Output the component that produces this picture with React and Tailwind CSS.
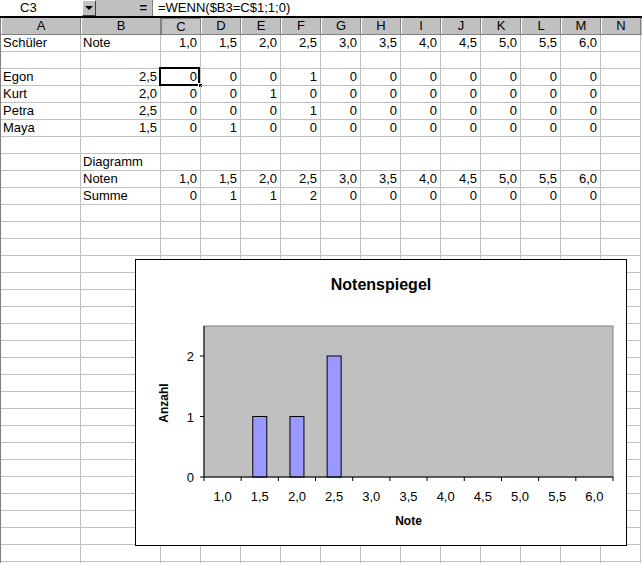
import React from 'react'

const cols = ['A', 'B', 'C', 'D', 'E', 'F', 'G', 'H', 'I', 'J', 'K', 'L', 'M', 'N']
const noten = ['1,0', '1,5', '2,0', '2,5', '3,0', '3,5', '4,0', '4,5', '5,0', '5,5', '6,0']

const z = (hit) => noten.map((_, i) => (i === hit ? '1' : '0'))

const rows = [
  ['Schüler', 'Note', ...noten],
  [],
  ['Egon', '2,5', ...z(3)],
  ['Kurt', '2,0', ...z(2)],
  ['Petra', '2,5', ...z(3)],
  ['Maya', '1,5', ...z(1)],
  [],
  ['', 'Diagramm'],
  ['', 'Noten', ...noten],
  ['', 'Summe', '0', '1', '1', '2', '0', '0', '0', '0', '0', '0', '0'],
]

const sums = [0, 1, 1, 2, 0, 0, 0, 0, 0, 0, 0]

const Chart = () => {
  // plot area inside the chart frame
  const px = 68, py = 66, pw = 409, ph = 151
  const step = pw / 11
  const unit = 60.5
  const base = py + ph
  return (
    <div className="absolute left-[135px] top-[259px] w-[492px] h-[287px] border border-black bg-white">
      <svg width="490" height="285" className="block" style={{ fontFamily: '"Liberation Sans", Arial, sans-serif' }}>
        <text x="245" y="30" textAnchor="middle" fontSize="16" fontWeight="bold" fill="#000">Notenspiegel</text>
        <rect x={px} y={py} width={pw} height={ph} fill="#c0c0c0" stroke="#808080" strokeWidth="1" />
        {sums.map((v, i) =>
          v > 0 ? (
            <rect
              key={i}
              x={px + (i + 0.5) * step - 7}
              y={base - v * unit}
              width="14"
              height={v * unit}
              fill="#9999ff"
              stroke="#000"
              strokeWidth="1"
            />
          ) : null
        )}
        <line x1={px} y1={py} x2={px} y2={base} stroke="#000" />
        <line x1={px} y1={base} x2={px + pw} y2={base} stroke="#000" />
        {[0, 1, 2].map((v) => (
          <g key={v}>
            <line x1={px - 4} y1={base - v * unit} x2={px} y2={base - v * unit} stroke="#000" />
            <text x={px - 10} y={base - v * unit + 5} textAnchor="end" fontSize="13" fill="#000">{v}</text>
          </g>
        ))}
        {Array.from({ length: 12 }).map((_, i) => (
          <line key={i} x1={px + i * step} y1={base} x2={px + i * step} y2={base + 4} stroke="#000" />
        ))}
        {noten.map((n, i) => (
          <text key={n} x={px + (i + 0.5) * step} y={base + 24} textAnchor="middle" fontSize="13" fill="#000">{n}</text>
        ))}
        <text x={px + pw / 2} y="265" textAnchor="middle" fontSize="12" fontWeight="bold" fill="#000">Note</text>
        <text
          x="0"
          y="0"
          transform="translate(32 143) rotate(-90)"
          textAnchor="middle"
          fontSize="12"
          fontWeight="bold"
          fill="#000"
        >
          Anzahl
        </text>
      </svg>
    </div>
  )
}

const App = () => {
  const total = 32

  return (
    <div className="relative w-[642px] h-[563px] overflow-hidden bg-white text-black text-[13px] font-['Liberation_Sans',Arial,sans-serif]">
      {/* Formula bar */}
      <div className="flex h-[18px] border-b-2 border-black">
        <div className="w-[82px] pl-[20px] leading-[16px] bg-white">C3</div>
        <div className="w-[14px] h-[16px] flex items-center justify-center bg-[#c0c0c0] border-t border-l border-white border-r border-b border-r-[#404040] border-b-[#404040]">
          <div className="w-0 h-0 border-l-[4px] border-r-[4px] border-t-[4px] border-l-transparent border-r-transparent border-t-black" />
        </div>
        <div className="w-[56px] bg-[#c0c0c0] flex justify-end pr-[5px] font-bold leading-[16px]">=</div>
        <div className="flex-1 bg-white pl-[5px] leading-[16px] border-l border-[#808080]">=WENN($B3=C$1;1;0)</div>
      </div>

      {/* Sheet */}
      <div className="border-l border-[#808080]">
        <div className="grid grid-cols-[80px_80px_repeat(12,40px)] h-[17px] bg-[#c0c0c0] border-b border-[#808080]">
          {cols.map((c) => (
            <div
              key={c}
              className={`text-center leading-[15px] border-r border-[#808080] ${c === 'C' ? 'border-l border-t border-l-[#808080] border-t-[#808080] bg-[#c4c4c4]' : 'border-l border-l-white'}`}
            >
              {c}
            </div>
          ))}
        </div>

        <div className="grid grid-cols-[80px_80px_repeat(12,40px)] auto-rows-[17px]">
          {Array.from({ length: total }).map((_, r) =>
            cols.map((c, ci) => {
              const v = (rows[r] || [])[ci] || ''
              const num = ci >= 2 || (ci === 1 && /^[0-9]/.test(v))
              const sel = r === 2 && ci === 2
              return (
                <div
                  key={`${r}-${c}`}
                  className={`relative border-r border-b border-[#c0c0c0] leading-[16px] whitespace-nowrap overflow-visible ${num ? 'text-right pr-[3px]' : 'pl-[2px]'}`}
                >
                  {v}
                  {sel && (
                    <>
                      <div className="absolute -left-[2px] -top-[2px] w-[41px] h-[19px] border-2 border-black" />
                      <div className="absolute -right-[3px] -bottom-[3px] w-[5px] h-[5px] bg-black border border-white" />
                    </>
                  )}
                </div>
              )
            })
          )}
        </div>
      </div>

      <Chart />
    </div>
  )
}

export default App
